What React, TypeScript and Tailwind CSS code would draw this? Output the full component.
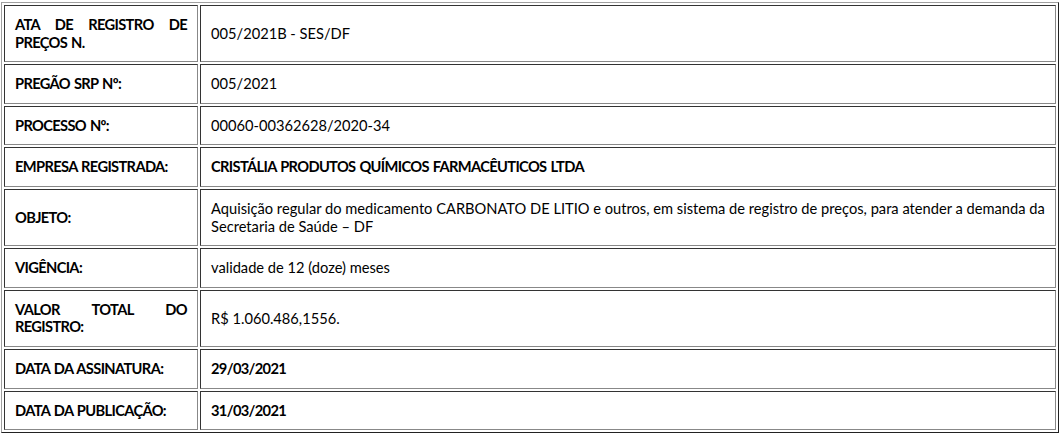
const rows: { label: string; value: string; boldValue?: boolean }[] = [
  { label: 'ATA DE REGISTRO DE PREÇOS N.', value: '005/2021B - SES/DF' },
  { label: 'PREGÃO SRP Nº:', value: '005/2021' },
  { label: 'PROCESSO Nº:', value: '00060-00362628/2020-34' },
  { label: 'EMPRESA REGISTRADA:', value: 'CRISTÁLIA PRODUTOS QUÍMICOS FARMACÊUTICOS LTDA', boldValue: true },
  {
    label: 'OBJETO:',
    value:
      'Aquisição regular do medicamento CARBONATO DE LITIO e outros, em sistema de registro de preços, para atender a demanda da Secretaria de Saúde – DF',
  },
  { label: 'VIGÊNCIA:', value: 'validade de 12 (doze) meses' },
  { label: 'VALOR TOTAL DO REGISTRO:', value: 'R$ 1.060.486,1556.' },
  { label: 'DATA DA ASSINATURA:', value: '29/03/2021', boldValue: true },
  { label: 'DATA DA PUBLICAÇÃO:', value: '31/03/2021', boldValue: true },
];

export default function App() {
  return (
    <div className="bg-white min-h-screen pt-[2px] pl-[1px] text-black" style={{ fontFamily: 'Lato, "Open Sans", sans-serif' }}>
      <table className="w-[1058px] border-separate border-spacing-[2px] border border-t-[#a0a0a0] border-l-[#a0a0a0] border-r-[#222] border-b-[#222] text-[14.67px] leading-[17.6px]">
        <tbody>
          {rows.map((r) => (
            <tr key={r.label}>
              <td className="w-[194px] align-middle px-[10px] py-[10px] border border-t-[#333] border-l-[#333] border-r-[#888] border-b-[#888] font-bold tracking-[-0.65px] [word-spacing:1px] text-justify">
                {r.label}
              </td>
              <td
                className={
                  'align-middle px-[10px] py-[10px] border border-t-[#333] border-l-[#333] border-r-[#888] border-b-[#888] ' +
                  (r.boldValue ? 'font-bold tracking-[-0.65px] [word-spacing:1px]' : '')
                }
              >
                {r.value}
              </td>
            </tr>
          ))}
        </tbody>
      </table>
    </div>
  );
}
